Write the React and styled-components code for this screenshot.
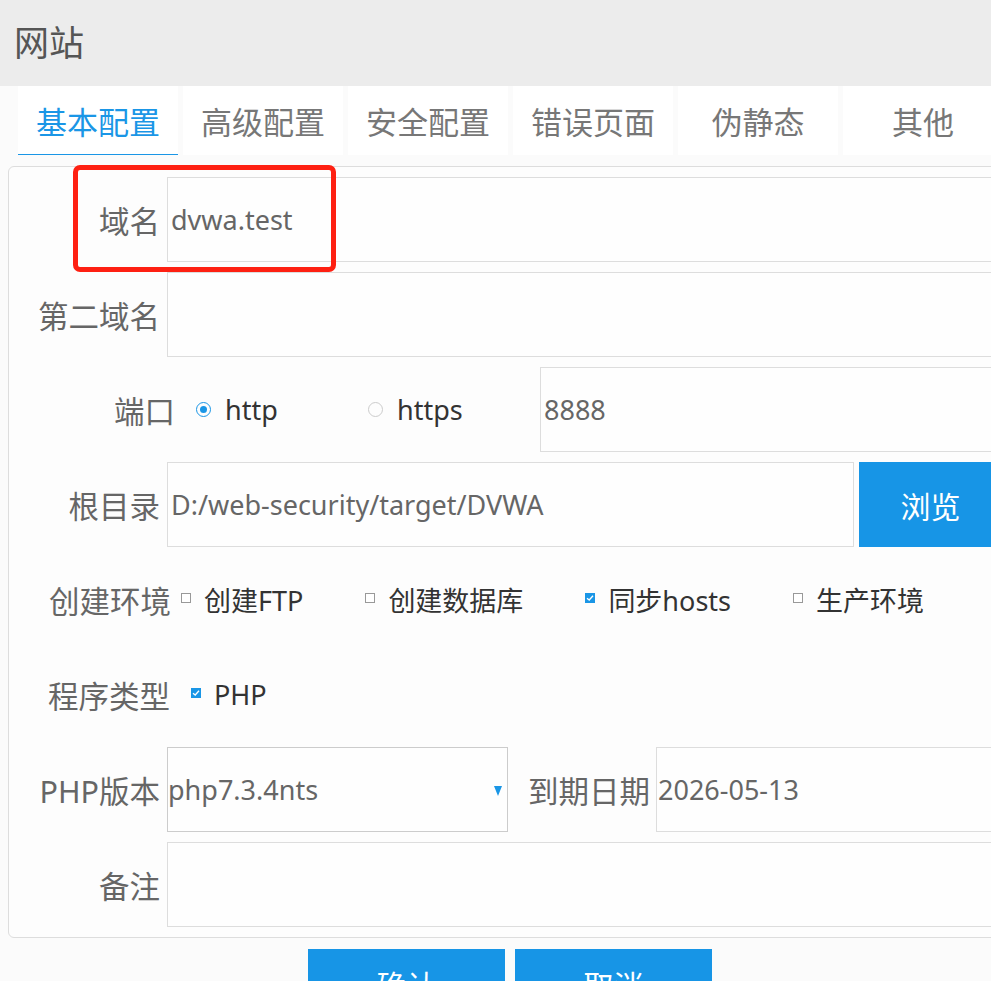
import React from "react";
import styled, { createGlobalStyle } from "styled-components";

const GlobalStyle = createGlobalStyle`
  html, body {
    margin: 0;
    padding: 0;
    overflow: hidden;
    background: #fbfbfb;
  }
  body {
    font-family: "Noto Sans", "Noto Sans CJK SC", sans-serif;
  }
`;

const Page = styled.div`
  width: 1020px;
`;

const Header = styled.div`
  height: 86px;
  box-sizing: border-box;
  background: #ececec;
  display: flex;
  align-items: center;
  padding: 0 0 6px 14px;
  font-size: 35px;
  color: #555;
`;

const Tabs = styled.div`
  display: flex;
  gap: 5px;
  padding-left: 18px;
`;

const Tab = styled.div`
  width: 160px;
  height: 69px;
  box-sizing: border-box;
  background: #fff;
  display: flex;
  align-items: center;
  justify-content: center;
  font-size: 31px;
  color: ${p => (p.$active ? "#1a96e6" : "#777")};
  border-bottom: 1px solid ${p => (p.$active ? "#1a96e6" : "transparent")};
`;

const Panel = styled.div`
  position: relative;
  margin: 11px 8px 0;
  border: 1px solid #ddd;
  border-radius: 6px;
  background: #fdfdfd;
  padding: 10px 9px 10px 0;
  display: flex;
  flex-direction: column;
  gap: 10px;
`;

const Highlight = styled.div`
  position: absolute;
  left: 64px;
  top: -2px;
  width: 263px;
  height: 107px;
  box-sizing: border-box;
  border: 5px solid #fe2012;
  border-radius: 7px;
  pointer-events: none;
`;

const Row = styled.div`
  display: flex;
  align-items: center;
  height: 85px;
`;

const Label = styled.div`
  flex: none;
  width: ${p => p.$w || 158}px;
  padding-right: ${p => (p.$pr ?? 7)}px;
  box-sizing: border-box;
  text-align: right;
  font-size: 30.5px;
  color: #666;
  white-space: nowrap;
`;

const Input = styled.input`
  flex: 1;
  min-width: 0;
  height: 85px;
  box-sizing: border-box;
  border: 1px solid #ddd;
  background: #fefefe;
  padding: 0 ${p => p.$pad ?? 3}px;
  font-family: inherit;
  font-size: 27px;
  color: #666;
  outline: none;
`;

const Select = styled.div`
  position: relative;
  flex: none;
  width: 341px;
  height: 85px;
  box-sizing: border-box;
  border: 1px solid #ccc;
  background: #fefefe;
  display: flex;
  align-items: center;
  padding-left: 0;
  font-size: 27px;
  color: #666;

  &::after {
    content: "";
    position: absolute;
    right: 5px;
    top: 38px;
    border-left: 4px solid transparent;
    border-right: 4px solid transparent;
    border-top: 10px solid #1a96e6;
  }
`;

const BlueButton = styled.div`
  flex: none;
  width: ${p => p.$w}px;
  height: ${p => p.$h}px;
  margin-left: ${p => p.$ml || 0}px;
  background: #1795e6;
  color: #fff;
  font-size: 30px;
  display: flex;
  align-items: center;
  justify-content: center;
`;

const Options = styled.div`
  display: flex;
  align-items: center;
  margin-left: ${p => p.$ml}px;
  gap: ${p => p.$gap || 0}px;
`;

const Option = styled.div`
  display: flex;
  align-items: center;
  width: ${p => (p.$w ? `${p.$w}px` : "auto")};
  gap: 13px;
  font-size: 27px;
  color: #333;
  white-space: nowrap;
`;

const Radio = styled.span`
  width: 15px;
  height: 15px;
  box-sizing: border-box;
  border-radius: 50%;
  border: 1px solid ${p => (p.$on ? "#1a96e6" : "#ccc")};
  display: flex;
  align-items: center;
  justify-content: center;
  margin-right: 1px;

  &::after {
    content: "";
    width: 7px;
    height: 7px;
    border-radius: 50%;
    background: ${p => (p.$on ? "#1a96e6" : "transparent")};
  }
`;

const Check = styled.span`
  width: 10px;
  height: 10px;
  box-sizing: border-box;
  border: 1px solid ${p => (p.$on ? "#1a96e6" : "#999")};
  background: ${p => (p.$on ? "#1a96e6" : "#fff")};
  display: flex;
  align-items: center;
  justify-content: center;
  margin-top: -3px;
`;

const Footer = styled.div`
  display: flex;
  justify-content: center;
  gap: 10px;
  margin-top: 11px;
`;

const Tick = () => (
  <svg width="8" height="8" viewBox="0 0 8 8">
    <path d="M1 4.2 L3.2 6 L7 1.8" fill="none" stroke="#fff" strokeWidth="1.3" />
  </svg>
);

const CheckOption = ({ on, children }) => (
  <Option>
    <Check $on={on}>{on && <Tick />}</Check>
    {children}
  </Option>
);

const tabs = ["基本配置", "高级配置", "安全配置", "错误页面", "伪静态", "其他"];

const App = () => (
  <Page>
    <GlobalStyle />
    <Header>网站</Header>
    <Tabs>
      {tabs.map((t, i) => (
        <Tab key={t} $active={i === 0}>
          {t}
        </Tab>
      ))}
    </Tabs>
    <Panel>
      <Highlight />
      <Row>
        <Label>域名</Label>
        <Input readOnly value="dvwa.test" />
      </Row>
      <Row>
        <Label>第二域名</Label>
        <Input readOnly value="" />
      </Row>
      <Row>
        <Label $w={166} $pr={0}>端口</Label>
        <Options $ml={21}>
          <Option $w={172}>
            <Radio $on />
            http
          </Option>
          <Option $w={172}>
            <Radio />
            https
          </Option>
        </Options>
        <Input readOnly value="8888" />
      </Row>
      <Row>
        <Label>根目录</Label>
        <Input readOnly value="D:/web-security/target/DVWA" />
        <BlueButton $w={143} $h={85} $ml={5}>
          浏览
        </BlueButton>
      </Row>
      <Row>
        <Label $w={162} $pr={0}>创建环境</Label>
        <Options $ml={10} $gap={62}>
          <CheckOption>创建FTP</CheckOption>
          <CheckOption>创建数据库</CheckOption>
          <CheckOption on>同步hosts</CheckOption>
          <CheckOption>生产环境</CheckOption>
        </Options>
      </Row>
      <Row>
        <Label $w={161} $pr={0}>程序类型</Label>
        <Options $ml={21}>
          <CheckOption on>PHP</CheckOption>
        </Options>
      </Row>
      <Row>
        <Label>PHP版本</Label>
        <Select>php7.3.4nts</Select>
        <Label $w={148} $pr={6}>到期日期</Label>
        <Input readOnly value="2026-05-13" $pad={1} />
      </Row>
      <Row>
        <Label>备注</Label>
        <Input readOnly value="" />
      </Row>
    </Panel>
    <Footer>
      <BlueButton $w={197} $h={70}>确认</BlueButton>
      <BlueButton $w={197} $h={70}>取消</BlueButton>
    </Footer>
  </Page>
);

export default App;
